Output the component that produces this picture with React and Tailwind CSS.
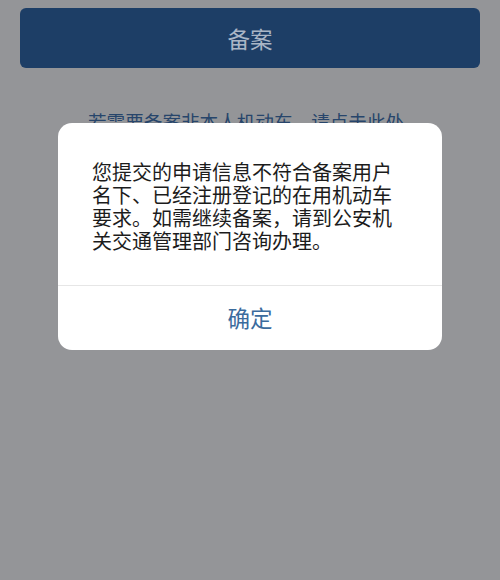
import React from 'react';

const font = { fontFamily: '"Noto Sans CJK SC", "Noto Sans", sans-serif' };

export default function App() {
  return (
    <div className="relative w-[500px] h-[580px] overflow-hidden bg-[#949598]" style={font}>
      {/* Page underneath (dimmed) */}
      <div className="px-5 pt-2">
        <button className="w-full h-[60px] rounded-md bg-[#1d3e66] text-[#aab6c6] text-[22.5px] leading-none flex items-center justify-center">
          备案
        </button>
        <p className="mt-[42px] pl-[68px] text-[18.6px] leading-[22px] text-[#27456b] whitespace-nowrap">
          若需要备案非本人机动车，请点击此处
        </p>
      </div>

      {/* Alert dialog */}
      <div className="absolute left-[58px] top-[123px] w-[384px] rounded-[14px] bg-white overflow-hidden">
        <div className="px-[34px] pt-[37px] pb-[33px] text-[20px] leading-[23px] text-[#1c1c1c]">
          您提交的申请信息不符合备案用户名下、已经注册登记的在用机动车要求。如需继续备案，请到公安机关交通管理部门咨询办理。
        </div>
        <div className="h-px bg-[#e6e6e6]" />
        <button className="w-full h-[64px] flex items-center justify-center text-[22.5px] text-[#3b6b9d]">
          确定
        </button>
      </div>
    </div>
  );
}
